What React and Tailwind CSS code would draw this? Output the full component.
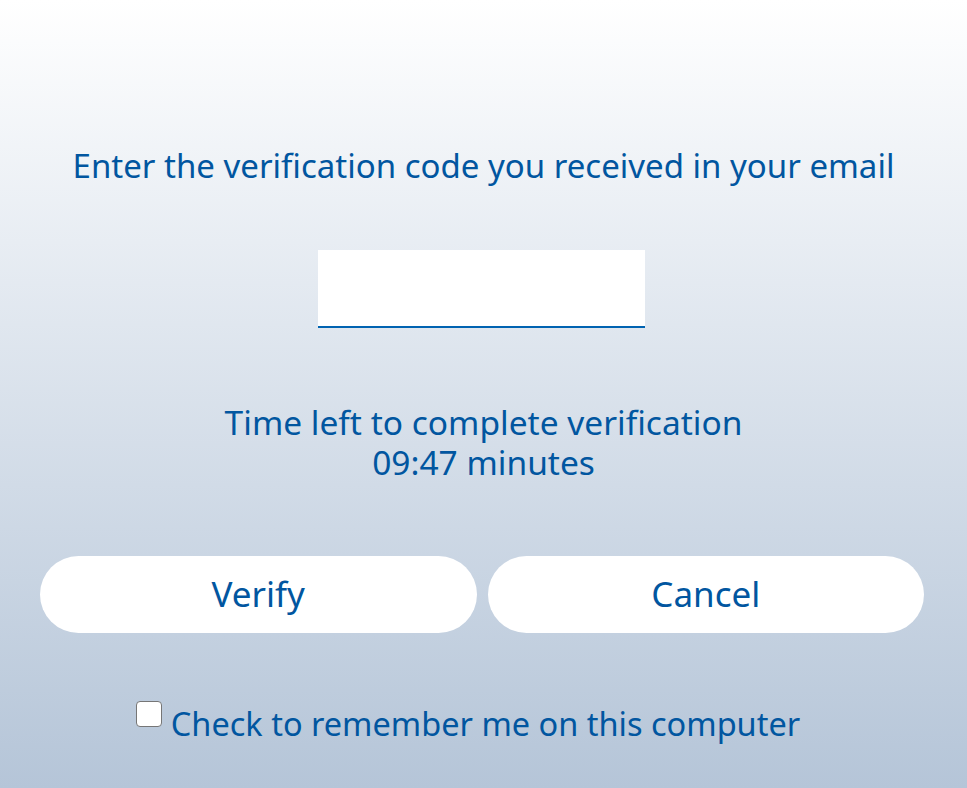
export default function App() {
  return (
    <div className="h-[788px] w-full overflow-hidden bg-gradient-to-b from-[#ffffff] to-[#b5c5d8] text-[#0156a0]" style={{ fontFamily: '"Noto Sans", sans-serif' }}>
      <div className="flex flex-col items-center pt-[143px]">
        <div className="text-[33px] leading-[46px] text-center">Enter the verification code you received in your email</div>
        <input type="text" className="mt-[61px] mr-[4px] h-[78px] w-[327px] bg-white border-b-2 border-[#0063b1] outline-none" />
        <div className="mt-[74px] text-[33.5px] leading-[40px] text-center">
          <div>Time left to complete verification</div>
          <div>09:47 minutes</div>
        </div>
        <div className="mt-[74px] flex w-full gap-[11px] pl-[40px] pr-[43px]">
          <button className="flex-1 h-[77px] rounded-full bg-white text-[35px] text-[#0156a0]">Verify</button>
          <button className="flex-1 h-[77px] rounded-full bg-white text-[35px] text-[#0156a0]">Cancel</button>
        </div>
        <label className="mt-[68px] flex items-start gap-[9px] pr-[31px]">
          <input type="checkbox" className="appearance-none h-[26px] w-[26px] rounded-[4px] border border-[#767676] bg-white" />
          <span className="text-[32.5px] leading-[46px]">Check to remember me on this computer</span>
        </label>
      </div>
    </div>
  );
}
